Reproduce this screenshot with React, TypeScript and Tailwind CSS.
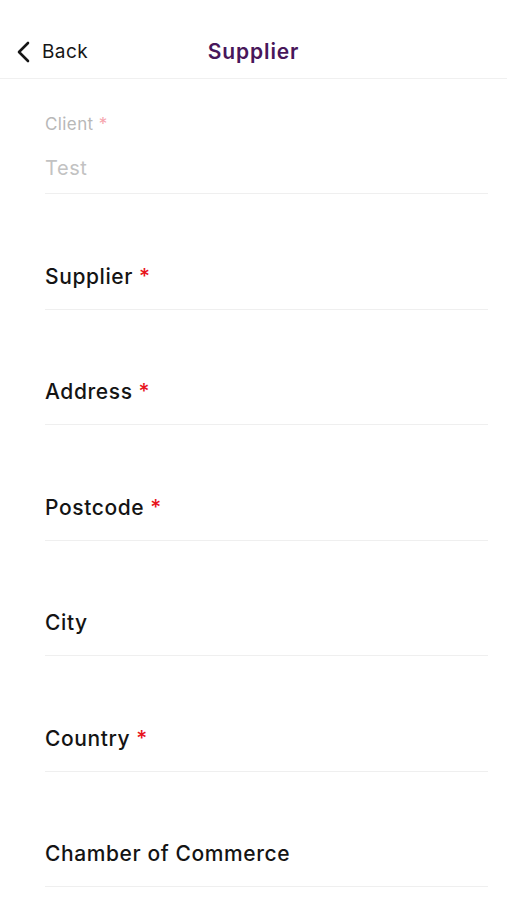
import React from "react";

const fields = [
  { label: "Supplier", required: true },
  { label: "Address", required: true },
  { label: "Postcode", required: true },
  { label: "City", required: false },
  { label: "Country", required: true },
  { label: "Chamber of Commerce", required: false },
];

export default function App() {
  return (
    <div className="min-h-screen bg-white font-['Inter',sans-serif] text-[#111]">
      {/* Header */}
      <header className="relative h-[79px] border-b border-[#f0f0f0] flex items-center pt-[26px]">
        <button className="flex items-center gap-[10px] pl-[16px] text-[19px] tracking-[0.4px] text-[#161616]">
          <svg width="16" height="22" viewBox="0 0 16 22" fill="none">
            <polyline
              points="12,2 3,11 12,20"
              stroke="#161616"
              strokeWidth="2.6"
              strokeLinecap="round"
              strokeLinejoin="round"
            />
          </svg>
          Back
        </button>
        <h1 className="absolute left-1/2 -translate-x-1/2 top-[26px] bottom-0 flex items-center text-[21px] font-semibold tracking-[0.9px] text-[#48165a]">
          Supplier
        </h1>
      </header>

      <main className="px-[45px] pr-[19px]">
        {/* Client (filled, disabled) */}
        <div className="h-[115px] border-b border-[#efefef] flex flex-col pt-[35px]">
          <span className="text-[17px] leading-[20px] tracking-[0.4px] text-[#b8b8b8]">
            Client <span className="text-[#f6a3ad]">*</span>
          </span>
          <span className="mt-[23px] text-[20px] leading-[22px] tracking-[0.6px] text-[#c2c2c2]">Test</span>
        </div>

        {fields.map((f) => (
          <div
            key={f.label}
            className="h-[115.5px] border-b border-[#efefef] flex items-end pb-[20px]"
          >
            <span className="text-[21px] leading-[24px] font-medium tracking-[0.6px] text-[#141414]">
              {f.label}
              {f.required && <span className="ml-[6px] text-[#e8141c]">*</span>}
            </span>
          </div>
        ))}
      </main>
    </div>
  );
}
